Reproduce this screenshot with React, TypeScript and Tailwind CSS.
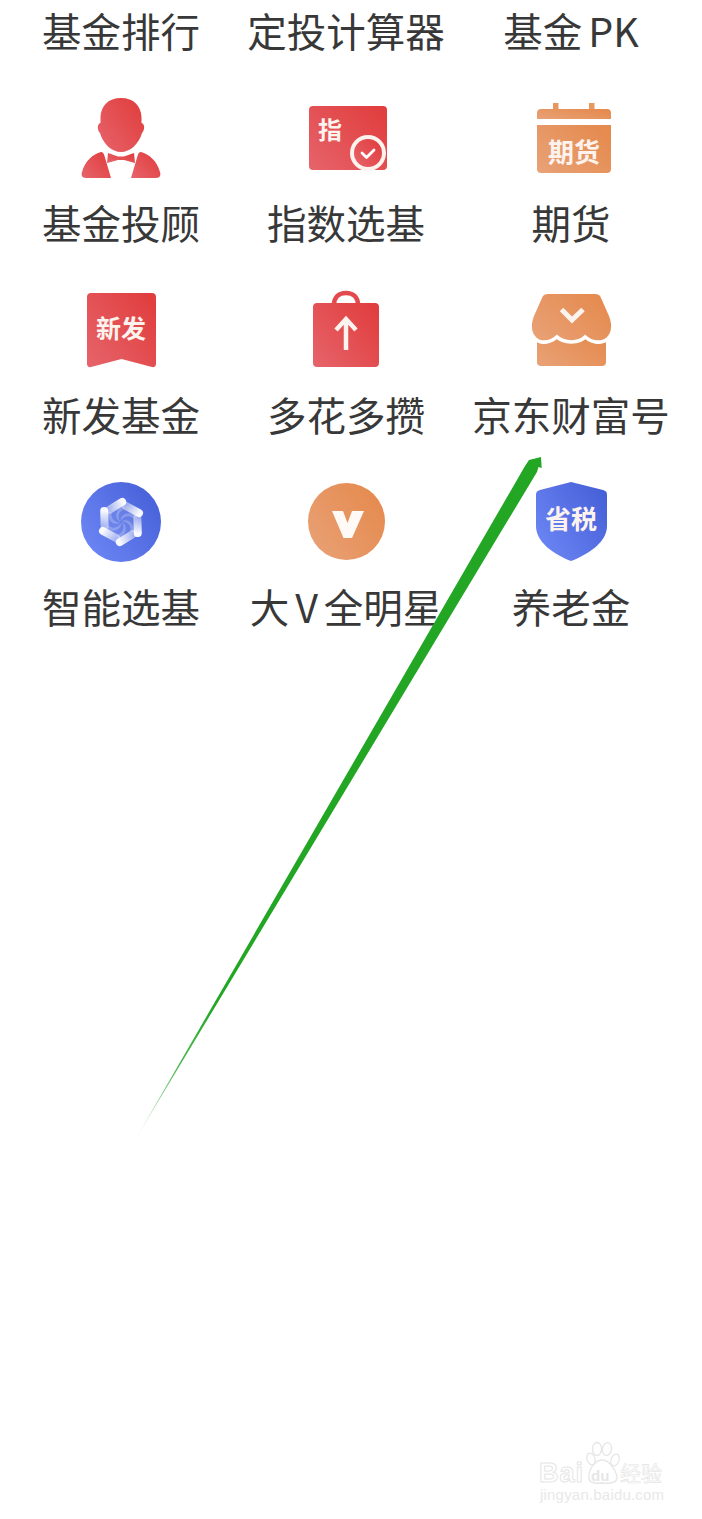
import React from 'react';

const cjk = { fontFamily: '"Noto Sans CJK SC", sans-serif' };
const latin = { fontFamily: '"Liberation Sans", sans-serif' };

function Defs() {
  return (
    <svg width="0" height="0" className="absolute">
      <defs>
        <linearGradient id="red" x1="0" y1="1" x2="1" y2="0.2">
          <stop offset="0" stopColor="#e6646b" />
          <stop offset="1" stopColor="#e13f3f" />
        </linearGradient>
        <linearGradient id="orange" x1="0" y1="1" x2="1" y2="0.3">
          <stop offset="0" stopColor="#e9a277" />
          <stop offset="1" stopColor="#e58b50" />
        </linearGradient>
        <linearGradient id="blue" x1="0" y1="0.9" x2="1" y2="0.2">
          <stop offset="0" stopColor="#6f88f6" />
          <stop offset="1" stopColor="#4660d8" />
        </linearGradient>
        <linearGradient id="blob" gradientUnits="userSpaceOnUse" x1="47" y1="26" x2="60" y2="33">
          <stop offset="0" stopColor="#ffffff" stopOpacity="0.45" />
          <stop offset="1" stopColor="#ffffff" stopOpacity="0.95" />
        </linearGradient>
      </defs>
    </svg>
  );
}

function IconText({ x, y, size, children }: { x: number; y: number; size: number; children: string }) {
  return (
    <text x={x} y={y} fontSize={size} fontWeight={700} fill="#fdf3ee" textAnchor="middle" dominantBaseline="central" style={cjk}>
      {children}
    </text>
  );
}

function Box({ children }: { children: React.ReactNode }) {
  return (
    <svg viewBox="0 0 84 84" className="w-[84px] h-[84px]">
      {children}
    </svg>
  );
}

const icons: Record<string, React.ReactNode> = {
  advisor: (
    <Box>
      <path fill="url(#red)" d="M42 2C29 2 22 10 21.500 21L21.500 27C18 28 18 34 21 37C24 48 33 56 42 56C51 56 60 48 63 37C66 34 66 28 62.500 27L62.500 21C62 10 55 2 42 2Z" />
      <path fill="url(#red)" d="M22 56C24 56 25 58 25.500 60L32 82L7 82C3 82 2 79 3 76C6 65 14 58 22 56Z" />
      <path fill="url(#red)" d="M62 56C60 56 59 58 58.500 60L52 82L77 82C81 82 82 79 81 76C78 65 70 58 62 56Z" />
      <path fill="url(#red)" d="M29 57L39 60.500L45 60.500L55 57L56 67L45 64L39 64L28 67Z" />
    </Box>
  ),
  index: (
    <Box>
      <rect x="5" y="10" width="78" height="64" rx="4" fill="url(#red)" />
      <circle cx="64" cy="57" r="18" fill="#fdf3ee" />
      <circle cx="64" cy="57" r="14" fill="url(#red)" />
      <path d="M58 57L62.500 61.500L70 54" fill="none" stroke="#fff" strokeWidth="2.800" strokeLinecap="round" strokeLinejoin="round" />
      <IconText x={26} y={32} size={24}>指</IconText>
    </Box>
  ),
  futures: (
    <Box>
      <rect x="24" y="7" width="5.500" height="8" fill="#e8975f" />
      <rect x="60" y="7" width="5.500" height="8" fill="#e8975f" />
      <path d="M8 23L8 17C8 15 9 13 12 13L78 13C81 13 82 15 82 17L82 23Z" fill="url(#orange)" />
      <path d="M8 29L82 29L82 73C82 75.500 80.500 77 78 77L12 77C9.500 77 8 75.500 8 73Z" fill="url(#orange)" />
      <IconText x={45} y={54} size={26}>期货</IconText>
    </Box>
  ),
  newFund: (
    <Box>
      <path d="M12 5L73 5C75.500 5 77 6.500 77 9L77 76C77 78.500 75 79.500 73 79L42.500 71L12 79C10 79.500 8 78.500 8 76L8 9C8 6.500 9.500 5 12 5Z" fill="url(#red)" />
      <IconText x={42} y={39} size={25}>新发</IconText>
    </Box>
  ),
  bag: (
    <Box>
      <path d="M30 17C30 9 35 5 42 5C49 5 54 9 54 17" fill="none" stroke="#e24a4e" strokeWidth="4.500" />
      <path d="M13 15L71 15C73.500 15 75 16.500 75 19L75 75C75 77.500 73.500 79 71 79L13 79C10.500 79 9 77.500 9 75L9 19C9 16.500 10.500 15 13 15Z" fill="url(#red)" />
      <path d="M42 62L42 31M32 42L42 31L52 42" fill="none" stroke="#fdf3ee" strokeWidth="4.500" />
    </Box>
  ),
  store: (
    <Box>
      <path d="M8 44L77 44L77 74C77 76.500 75.500 78 73 78L12 78C9.500 78 8 76.500 8 74Z" fill="url(#orange)" />
      <path
        d="M19 6L66 6C69 6 71 7 72 10L80 28C84 38 82 46 77 50C72 54 62 53 56 46.500C50 54 35 54 28 46.500C22 53 12 54 8 50C3 46 1 38 5 28L13 10C14 7 16 6 19 6Z"
        fill="url(#orange)"
        stroke="#ffffff"
        strokeWidth="7"
        paintOrder="stroke"
      />
      <path d="M32.500 21.500L43 32L54 21.500" fill="none" stroke="#fdf3ee" strokeWidth="5" />
    </Box>
  ),
  smart: (
    <Box>
      <circle cx="42" cy="42" r="40" fill="url(#blue)" />
      <circle cx="42" cy="42" r="17" fill="#ffffff" opacity="0.1" />
      {[0, 60, 120, 180, 240, 300].map((deg) => (
        <g key={deg} transform={`rotate(${deg} 42 42)`}>
          <path d="M44 26C36 30 35 38 41 42C38 36 40 31 46 29Z" fill="#ffffff" opacity="0.22" />
          <line x1="47" y1="26" x2="60" y2="33" stroke="url(#blob)" strokeWidth="8" strokeLinecap="round" />
        </g>
      ))}
    </Box>
  ),
  star: (
    <Box>
      <circle cx="42.500" cy="41.500" r="38.500" fill="url(#orange)" />
      <path d="M28 31L39 31L43.500 43L48 31L60 31L48 58L39.500 58Z" fill="#fffaf6" />
    </Box>
  ),
  pension: (
    <Box>
      <path d="M42 2L74 10C77 11 78 12 78 15L78 46C78 62 60 74 42 81C24 74 7 62 7 46L7 15C7 12 8 11 11 10Z" fill="url(#blue)" />
      <IconText x={42} y={37} size={26}>省税</IconText>
    </Box>
  ),
};

const grid = [
  { icon: 'advisor', label: '基金投顾' },
  { icon: 'index', label: '指数选基' },
  { icon: 'futures', label: '期货' },
  { icon: 'newFund', label: '新发基金' },
  { icon: 'bag', label: '多花多攒' },
  { icon: 'store', label: '京东财富号' },
  { icon: 'smart', label: '智能选基' },
  { icon: 'star', label: '大 V 全明星' },
  { icon: 'pension', label: '养老金' },
];

function Label({ children }: { children: React.ReactNode }) {
  return (
    <div className="h-[66px] leading-[60px] text-[39.500px] text-[#383838] text-center whitespace-nowrap [word-spacing:-3px]" style={cjk}>
      {children}
    </div>
  );
}

function Watermark() {
  return (
    <div className="absolute left-[537px] top-[1441px] w-[130px] h-[66px]">
      <svg viewBox="0 0 130 66" className="absolute inset-0 w-[130px] h-[66px]">
        <g fill="none" stroke="#e6e6e6" strokeWidth="1.300">
          <ellipse cx="54" cy="18" rx="4" ry="6" transform="rotate(-20 54 18)" />
          <ellipse cx="60" cy="8" rx="4.500" ry="6.500" />
          <ellipse cx="70" cy="8" rx="4.500" ry="6.500" transform="rotate(10 70 8)" />
          <ellipse cx="78" cy="19" rx="4" ry="6" transform="rotate(20 78 19)" />
          <path d="M52 35C52 28 58 19 65 19C72 19 78 28 80 35C81 41 75 43 65 42C56 43 51 41 52 35Z" />
        </g>
      </svg>
      <span className="absolute left-[2px] top-[21px] text-[27px] leading-[22px] font-bold tracking-[1px] text-transparent [-webkit-text-stroke:1px_#e6e6e6]" style={latin}>
        Bai
      </span>
      <span className="absolute left-[54px] top-[28px] text-[15px] leading-[14px] font-bold text-[#e6e6e6]" style={latin}>
        du
      </span>
      <span className="absolute left-[83px] top-[20px] text-[21px] leading-[22px] text-transparent [-webkit-text-stroke:0.6px_#e4e4e4]" style={cjk}>
        经验
      </span>
      <span className="absolute left-[3px] top-[46px] text-[15px] leading-[16px] tracking-[0.2px] text-[#e8e8e8]" style={latin}>
        jingyan.baidu.com
      </span>
    </div>
  );
}

export default function App() {
  return (
    <div className="relative w-[702px] h-[1519px] bg-white overflow-hidden">
      <Defs />
      <div className="grid grid-cols-[225px_225px_225px] pl-[8.500px]">
        <Label>基金排行</Label>
        <Label>定投计算器</Label>
        <Label>基金 PK</Label>
        {grid.map((item) => (
          <div key={item.icon} className="flex flex-col items-center">
            <div className="mt-[30px] w-[84px] h-[84px]">{icons[item.icon]}</div>
            <div className="mt-3 w-full">
              <Label>{item.label}</Label>
            </div>
          </div>
        ))}
      </div>

      {/* annotation arrow drawn over the page */}
      <svg viewBox="0 0 702 1519" className="absolute inset-0 w-[702px] h-[1519px]">
        <defs>
          <linearGradient id="arrow" gradientUnits="userSpaceOnUse" x1="135" y1="1140" x2="215" y2="1005">
            <stop offset="0" stopColor="#22a624" stopOpacity="0.1" />
            <stop offset="0.5" stopColor="#22a624" stopOpacity="0.75" />
            <stop offset="1" stopColor="#22a624" />
          </linearGradient>
        </defs>
        <path d="M135 1140L525 466L529 460L541 457L541.700 468L538.500 467L537 472Z" fill="url(#arrow)" />
      </svg>

      <Watermark />
    </div>
  );
}
